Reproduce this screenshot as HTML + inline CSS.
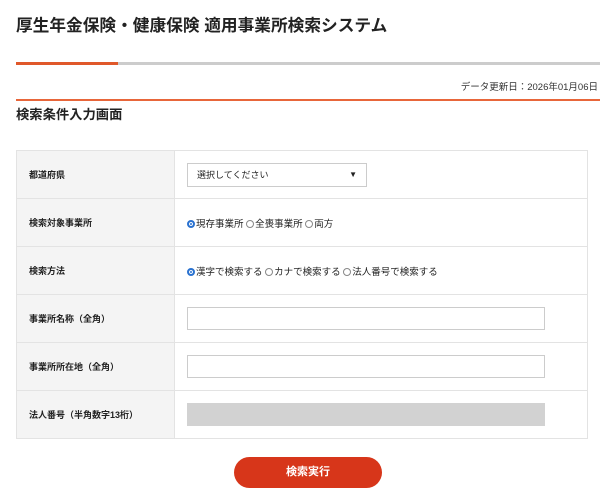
<!DOCTYPE html>
<html><head><meta charset="utf-8"><style>
body{margin:0;width:600px;height:498px;background:#fff;font-family:"Liberation Sans","Noto Sans CJK JP",sans-serif;color:#222;position:relative;overflow:hidden}
.a{position:absolute}
h1{position:absolute;left:16px;top:12px;margin:0;font-size:16.7px;font-weight:bold;letter-spacing:0}
table{position:absolute;left:16px;top:150px;width:572px;border-collapse:collapse}
td{border:1px solid #e3e3e3;height:47px;padding:0;font-size:9px}
td.l{background:#f4f4f4;width:145px;padding-left:12px;font-weight:bold}
td.r{padding-left:12px}
td.r.t{font-size:9.5px}
.in{width:358px;height:23px;border:1px solid #ccc;box-sizing:border-box}
.rad{display:inline-block;width:8px;height:8px;border:1px solid #888;border-radius:50%;vertical-align:-1px;margin-right:1px;box-sizing:border-box}
.on{border:2px solid #2a72d0;background:#2a72d0;box-shadow:inset 0 0 0 1px #fff}
</style></head><body>
<h1>厚生年金保険・健康保険 適用事業所検索システム</h1>
<div class="a" style="left:16px;top:62px;width:584px;height:3px;background:#ccc"></div>
<div class="a" style="left:16px;top:62px;width:102px;height:3px;background:#e0582a"></div>
<div class="a" style="right:2px;top:79px;font-size:9.5px;color:#333">データ更新日：2026年01月06日</div>
<div class="a" style="left:16px;top:99px;width:584px;height:2px;background:#e8663a"></div>
<div class="a" style="left:16px;top:104px;font-size:13.3px;font-weight:bold">検索条件入力画面</div>
<table>
<tr><td class="l">都道府県</td><td class="r"><div class="in" style="width:180px;height:24px;position:relative;font-size:9px;line-height:22px;padding-left:9px">選択してください<span style="position:absolute;right:9px;font-size:8px">▼</span></div></td></tr>
<tr><td class="l">検索対象事業所</td><td class="r t"><span class="rad on"></span>現存事業所 <span class="rad"></span>全喪事業所 <span class="rad"></span>両方</td></tr>
<tr><td class="l">検索方法</td><td class="r t"><span class="rad on"></span>漢字で検索する <span class="rad"></span>カナで検索する <span class="rad"></span>法人番号で検索する</td></tr>
<tr><td class="l">事業所名称（全角）</td><td class="r"><div class="in"></div></td></tr>
<tr><td class="l">事業所所在地（全角）</td><td class="r"><div class="in"></div></td></tr>
<tr><td class="l">法人番号（半角数字13桁）</td><td class="r"><div class="in" style="background:#d2d2d2;border-color:#d2d2d2"></div></td></tr>
</table>
<div class="a" style="left:234px;top:457px;width:148px;height:31px;border-radius:16px;background:#d7361a;color:#fff;font-size:11px;font-weight:bold;text-align:center;line-height:31px">検索実行</div>
</body></html>
